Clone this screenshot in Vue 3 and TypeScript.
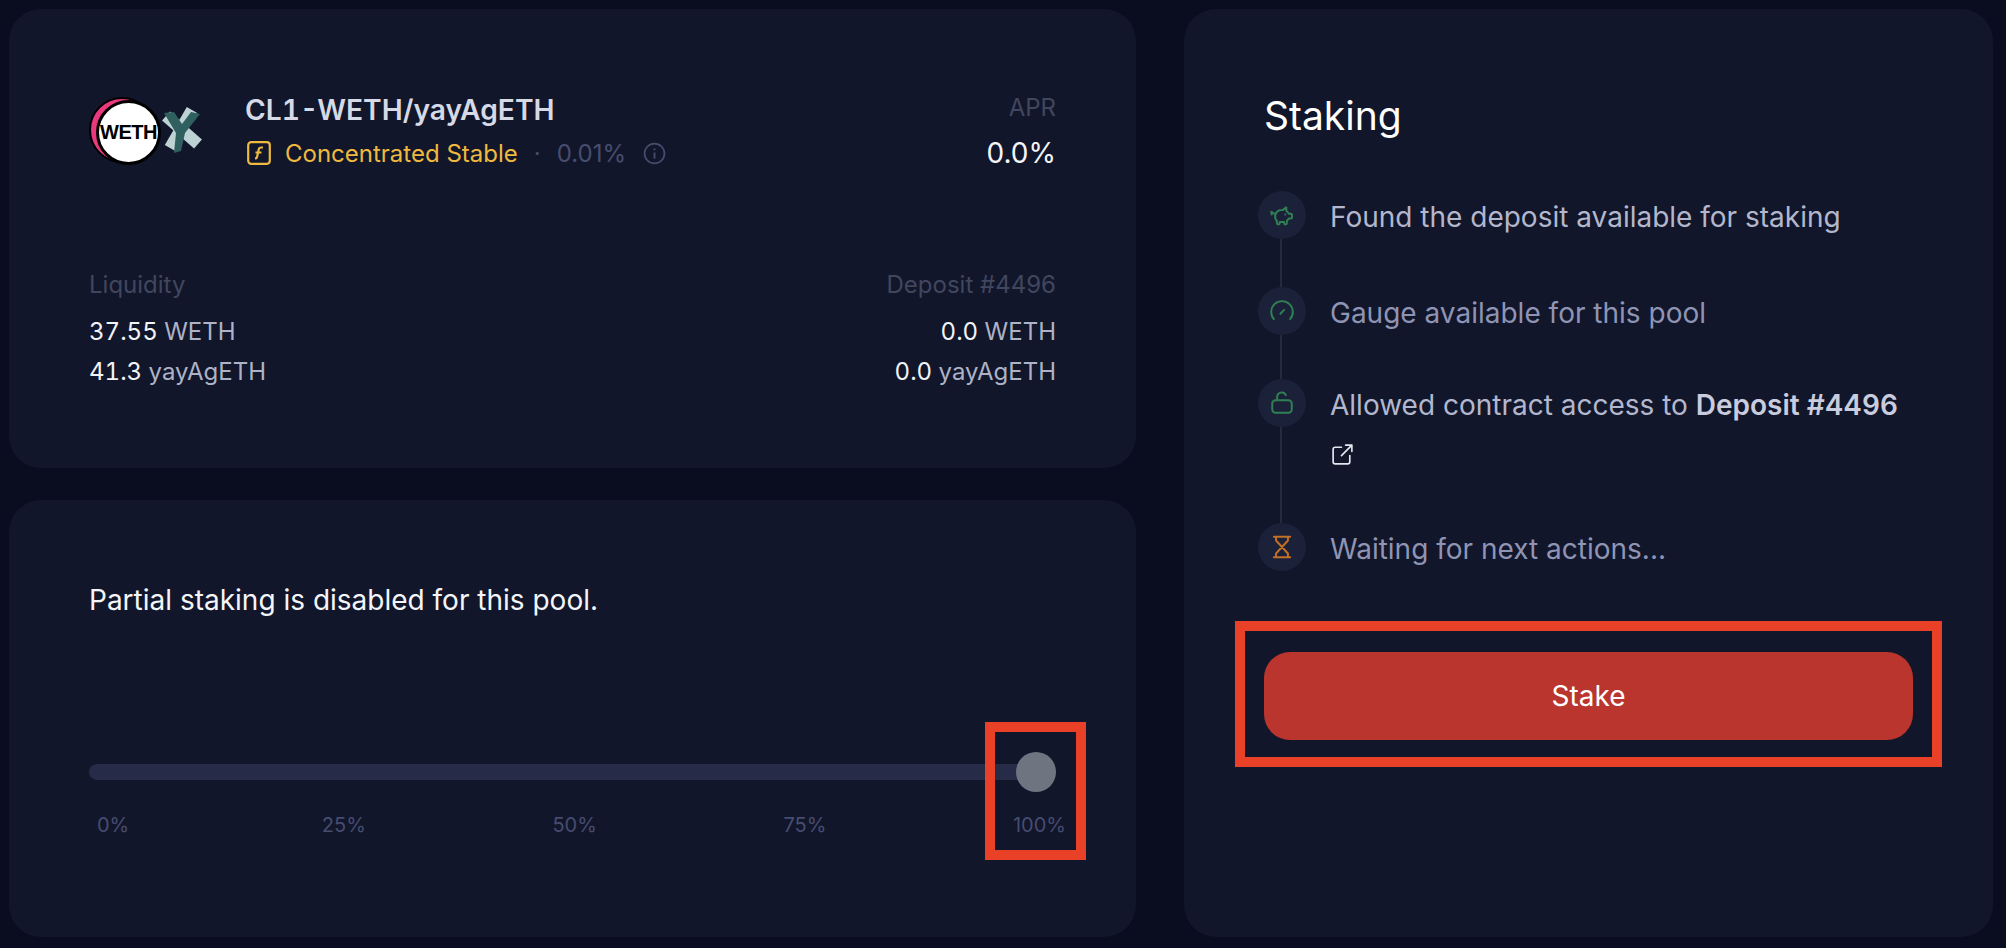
<script setup lang="ts">
interface Token { amount: string; name: string }
const liquidity: Token[] = [
  { amount: '37.55', name: 'WETH' },
  { amount: '41.3', name: 'yayAgETH' },
]
const deposit: Token[] = [
  { amount: '0.0', name: 'WETH' },
  { amount: '0.0', name: 'yayAgETH' },
]
const marks = ['0%', '25%', '50%', '75%', '100%']
</script>

<template>
  <main class="page">
    <div class="left">
      <section class="card info">
        <div class="head">
          <div class="logos">
            <span class="pink"></span>
            <span class="weth">WETH</span>
            <svg class="yay" viewBox="0 0 40 50" aria-hidden="true">
              <path d="M30 4 8 42" fill="none" stroke="#bdd2d2" stroke-width="12" />
              <path d="M4 10l32 28" fill="none" stroke="#bdd2d2" stroke-width="12" />
              <path d="M2 7l10-1 8 12 9-12 9 2-15 19-4 18-7 2 2-20z" fill="#2f5f5f" />
            </svg>
          </div>
          <div class="title">
            <div class="name">CL1-WETH/yayAgETH</div>
            <div class="meta">
              <svg class="fbox" viewBox="0 0 24 24" aria-hidden="true">
                <rect x="1.200" y="1.200" width="21.600" height="21.600" rx="3" fill="none" stroke="#eeb93f" stroke-width="2.200" />
                <path d="M16 6.500h-2c-1.300 0-2 .7-2.300 2l-1.500 7c-.3 1.300-1 2-2.200 2M8.500 11.500h6" fill="none" stroke="#eeb93f" stroke-width="2.200" />
              </svg>
              <span class="type">Concentrated Stable</span>
              <span class="dot">·</span>
              <span class="fee">0.01%</span>
              <svg class="info-icon" viewBox="0 0 22 22" aria-hidden="true">
                <circle cx="11" cy="11" r="9.500" fill="none" stroke="#474d6e" stroke-width="1.600" />
                <path d="M11 10v6M11 6.200v1.600" fill="none" stroke="#474d6e" stroke-width="1.800" />
              </svg>
            </div>
          </div>
          <div class="apr">
            <div class="label">APR</div>
            <div class="apr-value">0.0%</div>
          </div>
        </div>
        <div class="amounts">
          <div class="col">
            <div class="label">Liquidity</div>
            <div v-for="t in liquidity" :key="t.name" class="row"><b>{{ t.amount }}</b> {{ t.name }}</div>
          </div>
          <div class="col end">
            <div class="label">Deposit #4496</div>
            <div v-for="t in deposit" :key="t.name" class="row"><b>{{ t.amount }}</b> {{ t.name }}</div>
          </div>
        </div>
      </section>

      <section class="card partial">
        <p class="note">Partial staking is disabled for this pool.</p>
        <div class="slider">
          <div class="track"></div>
          <div class="thumb"></div>
          <div class="highlight slider-box"></div>
        </div>
        <div class="marks">
          <span v-for="m in marks" :key="m">{{ m }}</span>
        </div>
      </section>
    </div>

    <section class="card staking">
      <h1>Staking</h1>
      <ol class="steps">
        <li class="step first">
          <div class="rail">
            <span class="bubble">
              <svg viewBox="0 0 24 24" class="ic green" aria-hidden="true">
                <path d="M16 5v3.200a6 6 0 0 1 2.200 2.600h2a1 1 0 0 1 1 1v2.400a1 1 0 0 1-1 1h-2a6 6 0 0 1-1.700 2.200v2a1.300 1.300 0 0 1-2.600 0v-1h-4v1a1.300 1.300 0 0 1-2.600 0v-2A6 6 0 0 1 10 7.500h2.500z" />
                <path d="M4.500 10.500 2 9l.5 2.500M15 11.500v.01" />
              </svg>
            </span>
            <span class="line"></span>
          </div>
          <div class="text on">Found the deposit available for staking</div>
        </li>
        <li class="step second">
          <div class="rail">
            <span class="bubble">
              <svg viewBox="0 0 24 24" class="ic green" aria-hidden="true">
                <path d="M4.500 19.500A10 10 0 1 1 19.500 19.500M10.500 14.500l3.500-3.500" />
              </svg>
            </span>
            <span class="line"></span>
          </div>
          <div class="text">Gauge available for this pool</div>
        </li>
        <li class="step third">
          <div class="rail">
            <span class="bubble">
              <svg viewBox="0 0 24 24" class="ic green" aria-hidden="true">
                <rect x="3" y="9.500" width="18" height="11.500" rx="3" />
                <path d="M7.500 9.500V6.500a4.200 4.200 0 0 1 8-1.800" />
              </svg>
            </span>
            <span class="line"></span>
          </div>
          <div class="text on">
            Allowed contract access to <strong>Deposit #4496</strong>
            <svg viewBox="0 0 24 24" class="ext" aria-hidden="true">
              <path d="M11 5H5a2 2 0 0 0-2 2v12a2 2 0 0 0 2 2h12a2 2 0 0 0 2-2v-6M11 13 21 3M15 3h6v6" />
            </svg>
          </div>
        </li>
        <li class="step last">
          <div class="rail">
            <span class="bubble">
              <svg viewBox="0 0 24 24" class="ic orange" aria-hidden="true">
                <path d="M4.500 2.500h15M4.500 21.500h15M6.500 2.500v3.500L17.500 18v3.500M17.500 2.500v3.500L6.500 18v3.500" />
              </svg>
            </span>
          </div>
          <div class="text">Waiting for next actions...</div>
        </li>
      </ol>
      <div class="action">
        <button class="stake" type="button">Stake</button>
        <div class="highlight stake-box"></div>
      </div>
    </section>
  </main>
</template>

<style>
html, body { margin: 0; background: #0a0d1f; }
</style>

<style scoped>
.page {
  box-sizing: border-box;
  width: 2006px;
  height: 948px;
  padding: 9px 13px 11px 9px;
  display: grid;
  grid-template-columns: 1127px 809px;
  column-gap: 48px;
  background: #0a0d1f;
  font-family: Inter, "Liberation Sans", sans-serif;
  color: #fff;
}
.left { display: grid; grid-template-rows: 459px 437px; row-gap: 32px; }
.card { background: #11162a; border-radius: 32px; box-sizing: border-box; }
.info { padding: 84px 80px 0; }
.head { display: flex; align-items: flex-start; }
.logos { position: relative; width: 156px; height: 76px; flex: none; }
.pink {
  position: absolute; left: 0; top: 4px; width: 62px; height: 62px;
  border-radius: 50%; background: #e8387e; border: 2px solid #000;
}
.weth {
  position: absolute; left: 7px; top: 7px; box-sizing: border-box; width: 65px; height: 65px;
  border-radius: 50%; background: #fff; border: 3px solid #000;
  display: flex; align-items: center; justify-content: center;
  color: #000; font: 700 20px "Liberation Sans", sans-serif; letter-spacing: -0.5px;
}
.yay { position: absolute; left: 73px; top: 13px; width: 40px; height: 50px; overflow: visible; }
.title { flex: 1; }
.name { font-size: 28.200px; font-weight: 600; line-height: 34px; color: #d6d9e6; font-variant-numeric: tabular-nums; }
.meta { display: flex; align-items: center; height: 28px; margin-top: 12px; font-size: 24px; }
.fbox { width: 24px; height: 24px; margin: 0 14px 0 2px; }
.type { color: #eeb93f; }
.dot { color: #474d6e; margin: 0 16px; }
.fee { color: #474d6e; }
.info-icon { width: 23px; height: 23px; margin-left: 17px; }
.apr { text-align: right; }
.label { color: #41465f; font-size: 24px; line-height: 30px; }
.apr-value { font-size: 28px; line-height: 34px; margin-top: 13px; color: #f4f5f9; }
.amounts { display: flex; justify-content: space-between; margin-top: 100px; }
.col.end { text-align: right; }
.row { font-size: 24px; line-height: 40px; color: #aeb2c6; font-variant-numeric: tabular-nums; }
.col .label { margin-bottom: 12px; }
.row b { font-weight: 400; color: #f2f3f7; }

.partial { padding: 83px 80px 0; }
.note { margin: 0; font-size: 28px; line-height: 34px; color: #f4f5f9; }
.slider { position: relative; height: 40px; margin-top: 135px; }
.track { position: absolute; left: 0; right: 20px; top: 12px; height: 16px; background: #262b47; border-radius: 8px; }
.thumb { position: absolute; right: 0; top: 0; width: 40px; height: 40px; border-radius: 50%; background: #6e7580; }
.marks { display: flex; justify-content: space-between; margin: 18px -10px 0 8px; font-size: 20px; line-height: 30px; color: #474c70; }
.marks span:first-child { margin-right: 6px; }
.highlight { position: absolute; border: 10px solid #e84127; box-sizing: border-box; pointer-events: none; }
.slider-box { left: 896px; top: -30px; width: 101px; height: 138px; }

.staking { padding: 87px 71px 0 80px; }
h1 { margin: 0; font-size: 39px; font-weight: 400; line-height: 40px; color: #fff; }
.steps { list-style: none; margin: 55px 0 0 -6px; padding: 0; }
.step { display: flex; }
.rail { display: flex; flex-direction: column; align-items: center; width: 48px; flex: none; margin-right: 24px; }
.bubble { width: 48px; height: 48px; border-radius: 50%; background: #1b2138; display: flex; align-items: center; justify-content: center; flex: none; }
.line { width: 2px; flex: 1; background: #242a40; margin-right: 2px; }
.ic { width: 26px; height: 26px; fill: none; stroke-width: 1.800; stroke-linecap: round; stroke-linejoin: round; }
.green { stroke: #2f8053; }
.orange { stroke: #c26f27; }
.text { font-size: 28px; line-height: 50px; color: #8f94b4; max-width: 600px; padding-top: 1px; }
.text.on { color: #b3b7cd; }
.first .text { padding-bottom: 45px; }
.second .text { padding-bottom: 41px; }
.third .text { padding-bottom: 56px; }
strong { font-weight: 600; color: #c9ccde; }
.ext { display: block; width: 25px; height: 25px; margin: 12px 0 0; fill: none; stroke: #e4e6ee; stroke-width: 1.600; stroke-linecap: round; stroke-linejoin: round; }
.action { position: relative; margin-top: 78px; }
.stake {
  display: block; width: 649px; height: 88px; border: 0; border-radius: 26px;
  background: #ba352d; color: #fff; font: 400 28px Inter, "Liberation Sans", sans-serif;
}
.stake-box { left: -29px; top: -31px; width: 707px; height: 146px; }
</style>
